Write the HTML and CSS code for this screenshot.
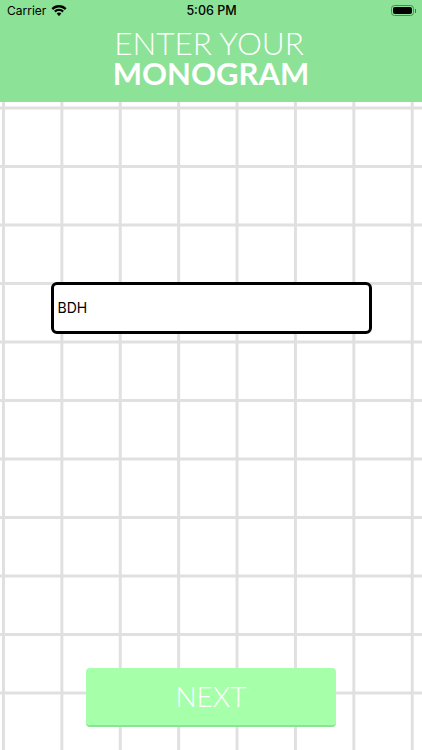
FILE: index.html
```html
<!DOCTYPE html>
<html lang="en">
<head>
  <meta charset="UTF-8">
  <meta name="viewport" content="width=device-width, initial-scale=1.0">
  <title>Enter your monogram</title>
  <link rel="stylesheet" href="styles.css">
</head>
<body>
  <header class="top">
    <div class="status-bar">
      <div class="status-left">
        <span>Carrier</span>
        <svg class="wifi" width="16" height="12" viewBox="0 0 16 12">
          <path d="M8 2.500c2.300 0 4.400.9 5.900 2.400l1.600-1.700C13.500 1.200 10.900 0 8 0S2.500 1.200.5 3.200l1.600 1.700C3.600 3.400 5.700 2.500 8 2.500z"/>
          <path d="M8 6.100c1.300 0 2.400.5 3.300 1.300l1.600-1.700C11.600 4.500 9.900 3.700 8 3.700s-3.600.8-4.900 2l1.600 1.700C5.600 6.600 6.700 6.100 8 6.100z"/>
          <path d="M8 7.600c-.9 0-1.700.3-2.300.9L8 11.200l2.300-2.700c-.6-.6-1.400-.9-2.300-.9z"/>
        </svg>
      </div>
      <span class="clock">5:06 PM</span>
      <div class="status-right">
        <div class="battery"><div class="battery-fill"></div></div>
        <div class="battery-cap"></div>
      </div>
    </div>
    <h1 class="title">
      <span class="title-light">ENTER YOUR</span>
      <span class="title-bold">MONOGRAM</span>
    </h1>
  </header>

  <main class="grid">
    <input class="monogram" type="text" value="BDH">
    <button class="next" type="button">NEXT</button>
  </main>
</body>
</html>
```

FILE: styles.css
```css
* {
  box-sizing: border-box;
}

body {
  margin: 0;
  padding: 0;
  width: 422px;
  height: 750px;
  display: flex;
  flex-direction: column;
  overflow: hidden;
  background-color: white;
}

.top {
  height: 102px;
  background-color: #8ce297;
  color: white;
}

.status-bar {
  height: 20px;
  padding: 1px 6px 0 7px;
  display: flex;
  align-items: center;
  color: black;
  font-family: "Inter", "Liberation Sans", sans-serif;
  font-size: 12px;
}

.status-left,
.status-right {
  flex: 1;
  display: flex;
  align-items: center;
}

.status-left {
  gap: 5px;
}

.status-right {
  justify-content: flex-end;
  gap: 1px;
}

.wifi {
  fill: black;
  margin-top: 0;
}

.clock {
  font-weight: 500;
  font-size: 12.500px;
}

.battery {
  width: 23px;
  height: 11px;
  padding: 1px;
  border: 1.500px solid #4c8a56;
  border-radius: 3.500px;
}

.battery-fill {
  height: 100%;
  background-color: black;
  border-radius: 2px;
}

.battery-cap {
  width: 1px;
  height: 4px;
  background-color: #3f7a48;
}

.title {
  margin: 0;
  padding-top: 8px;
  display: flex;
  flex-direction: column;
  align-items: center;
  font-family: "Lato", sans-serif;
  font-size: 31.500px;
  line-height: 30px;
  font-weight: 400;
}

.title-light {
  padding-right: 4px;
  font-weight: 300;
}

.title-bold {
  font-size: 31px;
  font-weight: 700;
}

.grid {
  flex: 1;
  display: flex;
  flex-direction: column;
  align-items: center;
  background-color: white;
  background-image:
    linear-gradient(to right, #e0e0e0 3px, transparent 3px),
    linear-gradient(to bottom, #e0e0e0 3px, transparent 3px);
  background-size: 58.400px 58.500px;
  background-position: 2px 4.500px;
}

.monogram {
  width: 321px;
  height: 52px;
  margin: 180px 0 0 0;
  padding: 0 4px 2px;
  border: 3px solid black;
  border-radius: 6px;
  background-color: white;
  color: black;
  font-family: "Inter", "Liberation Sans", sans-serif;
  font-size: 14px;
  outline: none;
}

.next {
  width: 250px;
  height: 59px;
  margin-top: auto;
  margin-bottom: 23px;
  padding: 0 0 2px;
  border: none;
  border-bottom: 2px solid #8ce297;
  border-radius: 4px;
  background-color: #a6ffa9;
  color: white;
  font-family: "Lato", sans-serif;
  font-size: 28px;
  font-weight: 300;
}
```
